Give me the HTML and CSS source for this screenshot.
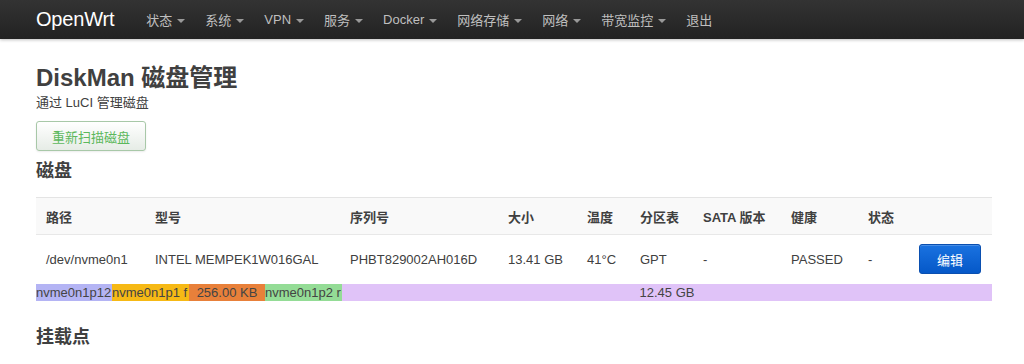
FILE: index.html
```html
<!DOCTYPE html>
<html lang="zh-CN">
<head>
<meta charset="utf-8">
<title>DiskMan</title>
<link rel="stylesheet" href="styles.css">
</head>
<body>
<header class="navbar">
  <a class="brand">OpenWrt</a>
  <ul class="nav">
    <li>状态<span class="caret"></span></li>
    <li>系统<span class="caret"></span></li>
    <li>VPN<span class="caret"></span></li>
    <li>服务<span class="caret"></span></li>
    <li>Docker<span class="caret"></span></li>
    <li>网络存储<span class="caret"></span></li>
    <li>网络<span class="caret"></span></li>
    <li>带宽监控<span class="caret"></span></li>
    <li>退出</li>
  </ul>
</header>
<main class="container">
  <h2 class="title">DiskMan 磁盘管理</h2>
  <div class="desc">通过 LuCI 管理磁盘</div>
  <button class="btn btn-rescan">重新扫描磁盘</button>
  <h3 class="section">磁盘</h3>
  <table class="disks">
    <colgroup>
      <col style="width:109px"><col style="width:195px"><col style="width:158px"><col style="width:79px"><col style="width:53px"><col style="width:63px"><col style="width:88px"><col style="width:77px"><col style="width:51px"><col>
    </colgroup>
    <thead>
      <tr><th>路径</th><th>型号</th><th>序列号</th><th>大小</th><th>温度</th><th>分区表</th><th>SATA 版本</th><th>健康</th><th>状态</th><th></th></tr>
    </thead>
    <tbody>
      <tr><td>/dev/nvme0n1</td><td>INTEL MEMPEK1W016GAL</td><td>PHBT829002AH016D</td><td>13.41 GB</td><td>41°C</td><td>GPT</td><td>-</td><td>PASSED</td><td>-</td><td><button class="btn btn-edit">编辑</button></td></tr>
    </tbody>
  </table>
  <div class="partbar">
    <div class="seg seg-a" style="width:76px">nvme0n1p12</div>
    <div class="seg seg-b" style="width:77px" title="nvme0n1p1 fat32">nvme0n1p1 f</div>
    <div class="seg seg-c" style="width:76px">256.00 KB</div>
    <div class="seg seg-d" style="width:77px" title="nvme0n1p2 raw">nvme0n1p2 r</div>
    <div class="seg seg-e">12.45 GB</div>
  </div>
  <h3 class="section mount">挂载点</h3>
</main>
</body>
</html>
```
FILE: styles.css
```css
* { box-sizing: border-box; }
body {
  margin: 0;
  background: #fff;
  color: #404040;
  font-family: "Liberation Sans", "Noto Sans CJK SC", sans-serif;
  font-size: 13px;
}
.navbar {
  height: 39px;
  display: flex;
  align-items: center;
  padding-left: 36px;
  background: linear-gradient(#333, #222);
  box-shadow: 0 1px 3px rgba(0,0,0,0.25);
}
.brand {
  color: #fff;
  font-size: 20px;
  margin-right: 22px;
  letter-spacing: -0.2px;
}
.nav {
  display: flex;
  list-style: none;
  margin: 0;
  padding: 0;
}
.nav li {
  color: #bfbfbf;
  font-size: 13px;
  padding: 0 10px;
  display: flex;
  align-items: center;
}
.caret {
  display: inline-block;
  width: 0;
  height: 0;
  margin-left: 5px;
  margin-top: 2px;
  border-left: 4px solid transparent;
  border-right: 4px solid transparent;
  border-top: 4px solid #999;
}
.container {
  padding: 0 32px 0 36px;
}
.title {
  margin: 24px 0 0;
  font-size: 24px;
  line-height: 30px;
  font-weight: bold;
  color: #404040;
}
.desc {
  margin-top: 1px;
  line-height: 18px;
  font-size: 13px;
}
.btn {
  font-family: inherit;
  font-size: 13px;
  border-radius: 3px;
  cursor: pointer;
}
.btn-rescan {
  margin-top: 9px;
  width: 110px;
  height: 30px;
  color: #5cb85c;
  border: 1px solid #a8c8a8;
  background: linear-gradient(#ffffff, #e6ece6);
  box-shadow: inset 0 1px 0 rgba(255,255,255,0.2), 0 1px 2px rgba(0,0,0,0.08);
}
.section {
  margin: 8px 0 0;
  font-size: 18px;
  line-height: 24px;
  font-weight: bold;
  color: #404040;
}
.disks {
  margin-top: 14px;
  width: 100%;
  border-collapse: collapse;
  table-layout: fixed;
}
.disks th {
  background: #f9f9f9;
  border-top: 1px solid #e4e4e4;
  border-bottom: 1px solid #e8e8e8;
  height: 37px;
  text-align: left;
  font-weight: bold;
  padding: 0 10px;
  color: #404040;
}
.disks td {
  height: 49px;
  padding: 0 10px;
  color: #404040;
  white-space: nowrap;
}
.btn-edit {
  width: 62px;
  height: 30px;
  color: #fff;
  border: 1px solid #0a4fb0;
  background: linear-gradient(#1a72e0, #0558c8);
  box-shadow: inset 0 1px 0 rgba(255,255,255,0.2);
}
.partbar {
  display: flex;
  height: 17px;
  line-height: 17px;
  font-size: 13px;
  color: #444;
}
.seg {
  flex: none;
  overflow: hidden;
  white-space: nowrap;
}
.seg-a { background: #b4b4f4; }
.seg-b { background: #f6b915; }
.seg-c { background: #e8803a; text-align: center; }
.seg-d { background: #94dc96; }
.seg-e { flex: 1; background: #e0c3f8; text-align: center; }
.mount { margin-top: 24px; }
```
